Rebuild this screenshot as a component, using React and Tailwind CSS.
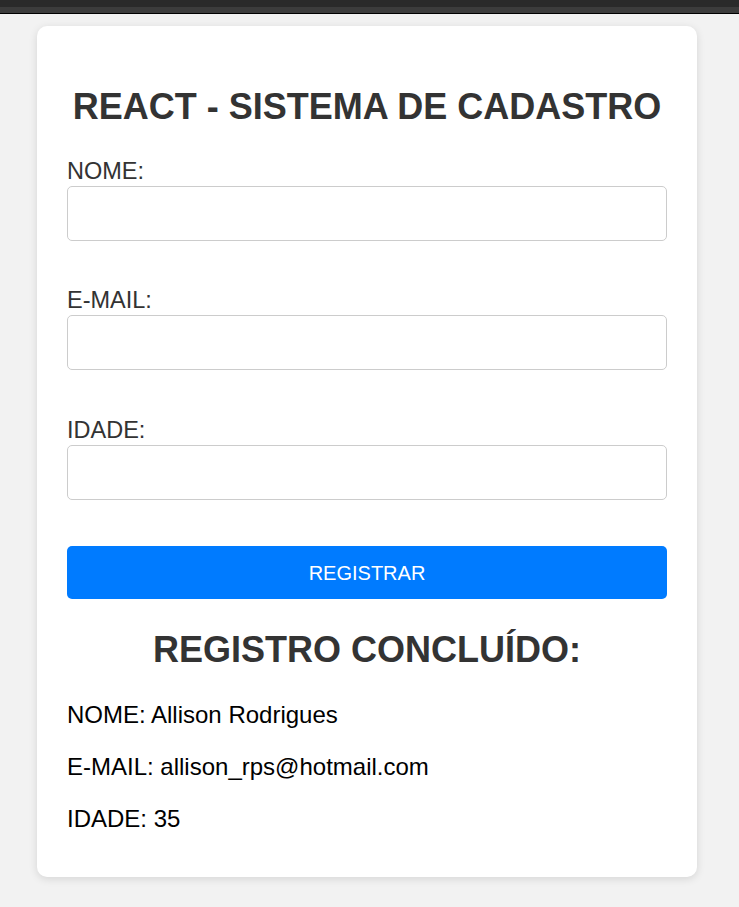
export default function App() {
    return (
        <div className="min-h-[907px] bg-[#f2f2f2] font-['Liberation_Sans',Arial,sans-serif]">
            <div className="h-[7px] bg-[#2a2a2a]" />
            <div className="h-[6px] bg-[#3c3c3c]" />
            <div className="h-px bg-black" />

            <div className="ml-[37px] mt-[12px] w-[660px] rounded-[10px] bg-white px-[30px] pt-[60px] pb-[44px] shadow-[0_2px_8px_rgba(0,0,0,0.12)]">
                <h1 className="text-center text-[36px] font-bold leading-[41px] text-[#333]">
                    REACT - SISTEMA DE CADASTRO
                </h1>

                <form className="mt-[31px]" onSubmit={(e) => e.preventDefault()}>
                    <label className="block text-[23.5px] leading-[27px] text-[#333]">NOME:</label>
                    <input className="mt-[1px] block h-[55px] w-full rounded-[5px] border border-[#ccc] px-3 text-[18px] outline-none" />

                    <label className="mt-[46px] block text-[23.5px] leading-[27px] text-[#333]">E-MAIL:</label>
                    <input className="mt-[1px] block h-[55px] w-full rounded-[5px] border border-[#ccc] px-3 text-[18px] outline-none" />

                    <label className="mt-[47px] block text-[23.5px] leading-[27px] text-[#333]">IDADE:</label>
                    <input className="mt-[1px] block h-[55px] w-full rounded-[5px] border border-[#ccc] px-3 text-[18px] outline-none" />

                    <button
                        type="submit"
                        className="mt-[46px] block h-[53px] w-full rounded-[5px] bg-[#007bff] text-[20px] text-white"
                    >
                        REGISTRAR
                    </button>
                </form>

                <h2 className="mt-[30px] text-center text-[36px] font-bold leading-[41px] text-[#333]">
                    REGISTRO CONCLUÍDO:
                </h2>

                <div className="mt-[31px] flex flex-col gap-[24px] text-[24px] leading-[28px] text-black">
                    <p>NOME: Allison Rodrigues</p>
                    <p>E-MAIL: allison_rps@hotmail.com</p>
                    <p>IDADE: 35</p>
                </div>
            </div>
        </div>
    );
}
